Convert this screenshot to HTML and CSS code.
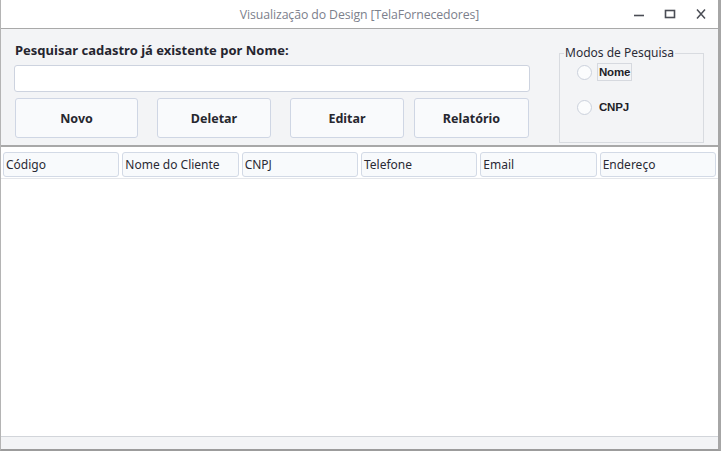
FILE: index.html
```html
<!DOCTYPE html>
<html lang="pt">
<head>
<meta charset="utf-8">
<title>TelaFornecedores</title>
<link rel="stylesheet" href="styles.css">
</head>
<body>
<div class="window">
  <div class="titlebar">
    <div class="title">Visualização do Design [TelaFornecedores]</div>
    <div class="controls">
      <svg class="ctl" width="14" height="14" viewBox="0 0 14 14"><path d="M2 8.5h10" stroke="#4a4d55" stroke-width="1.6"/></svg>
      <svg class="ctl" width="14" height="14" viewBox="0 0 14 14"><rect x="2.5" y="3.5" width="9" height="7" fill="none" stroke="#4a4d55" stroke-width="1.6"/></svg>
      <svg class="ctl" width="14" height="14" viewBox="0 0 14 14"><path d="M3 2.5l8 9M11 2.5l-8 9" stroke="#4a4d55" stroke-width="1.5"/></svg>
    </div>
  </div>
  <div class="panel">
    <div class="search">
      <div class="search-label">Pesquisar cadastro já existente por Nome:</div>
      <div class="input"></div>
      <div class="buttons">
        <div class="btn btn-novo">Novo</div>
        <div class="btn btn-deletar">Deletar</div>
        <div class="btn btn-editar">Editar</div>
        <div class="btn btn-relatorio">Relatório</div>
      </div>
    </div>
    <fieldset class="modes">
      <legend>Modos de Pesquisa</legend>
      <div class="radio"><span class="circle"></span><span class="rlabel focused">Nome</span></div>
      <div class="radio"><span class="circle"></span><span class="rlabel">CNPJ</span></div>
    </fieldset>
  </div>
  <div class="table">
    <div class="thead">
      <div class="th">Código</div>
      <div class="th">Nome do Cliente</div>
      <div class="th">CNPJ</div>
      <div class="th">Telefone</div>
      <div class="th">Email</div>
      <div class="th">Endereço</div>
    </div>
    <div class="tbody"></div>
  </div>
  <div class="status"></div>
</div>
</body>
</html>
```

FILE: styles.css
```css
* { box-sizing: border-box; }
html, body { margin: 0; padding: 0; }
body {
  width: 721px;
  height: 451px;
  overflow: hidden;
  font-family: "Noto Sans", "DejaVu Sans", sans-serif;
  color: #24242e;
  background: #ffffff;
}
.window {
  width: 721px;
  height: 451px;
  display: flex;
  flex-direction: column;
  border-left: 1px solid #b4b4b4;
  border-right: 3px solid #a6a6a6;
  border-bottom: 2px solid #9c9c9c;
  background: #f3f4f6;
}
.titlebar {
  height: 29px;
  flex: none;
  background: #ffffff;
  border-bottom: 1px solid #a9a9a9;
  position: relative;
  display: flex;
  align-items: center;
  justify-content: center;
}
.title {
  font-family: "Open Sans", "Noto Sans", sans-serif;
  font-size: 12.3px;
  color: #7c808c;
  letter-spacing: -0.1px;
  margin-left: 0;
}
.controls {
  position: absolute;
  right: 10px;
  top: 7px;
  display: flex;
  gap: 17px;
}
.ctl { display: block; }
.panel {
  height: 118px;
  flex: none;
  display: flex;
  padding: 12px 13px 0 13px;
  border-bottom: 2px solid #a8a8a8;
  background: #f3f4f6;
}
.search {
  width: 516px;
  display: flex;
  flex-direction: column;
}
.search-label {
  font-size: 13px;
  font-weight: bold;
  line-height: 16px;
  padding-left: 1px;
  margin-top: 1px;
  color: #25252f;
}
.input {
  margin-top: 7px;
  height: 27px;
  background: #ffffff;
  border: 1px solid #cdd3df;
  border-radius: 3px;
}
.buttons {
  margin-top: 6px;
  display: flex;
  padding-left: 1px;
}
.btn {
  height: 40px;
  display: flex;
  align-items: center;
  justify-content: center;
  background: #f9fafc;
  border: 1px solid #cfd6e4;
  border-radius: 3px;
  font-size: 12.5px;
  font-weight: bold;
  color: #27272f;
}
.btn-novo { width: 123px; }
.btn-deletar { width: 114px; margin-left: 19px; }
.btn-editar { width: 114px; margin-left: 19px; }
.btn-relatorio { width: 115px; margin-left: 10px; }
.modes {
  margin: 5px 0 2px 29px;
  padding: 0 0 0 17px;
  width: 145px;
  border: 1px solid #d8dbe0;
  border-radius: 0;
}
.modes legend {
  font-size: 12px;
  color: #2c2c36;
  padding: 0 1px;
  margin-left: -13px;
  line-height: 14px;
}
.radio {
  display: flex;
  align-items: center;
  height: 20px;
  margin-top: 2px;
}
.radio + .radio { margin-top: 15px; }
.circle {
  width: 15px;
  height: 15px;
  border-radius: 50%;
  border: 1px solid #cbd1dc;
  background: #fbfcfd;
  flex: none;
}
.rlabel {
  font-family: "Liberation Sans", Arial, sans-serif;
  font-size: 11.5px;
  font-weight: bold;
  color: #1e1e28;
  margin-left: 5px;
  padding: 2px 1px;
  border: 1px solid transparent;
  letter-spacing: -0.2px;
}
.rlabel.focused { border-color: #d6d9df; }
.table {
  flex: 1;
  background: #ffffff;
  display: flex;
  flex-direction: column;
  border-bottom: 1px solid #d2d5da;
}
.thead {
  margin-top: 5px;
  padding: 0 2px 0 2px;
  display: grid;
  grid-template-columns: repeat(6, 1fr);
  gap: 3px;
  border-bottom: 1px solid #e4e6ea;
  padding-bottom: 1px;
}
.th {
  height: 25px;
  display: flex;
  align-items: center;
  padding-left: 2px;
  background: #f8fafc;
  border: 1px solid #d3dae6;
  border-radius: 3px;
  font-size: 12px;
  color: #2a2a34;
}
.tbody { flex: 1; }
.status {
  height: 12px;
  flex: none;
  background: #f3f4f6;
}
```
